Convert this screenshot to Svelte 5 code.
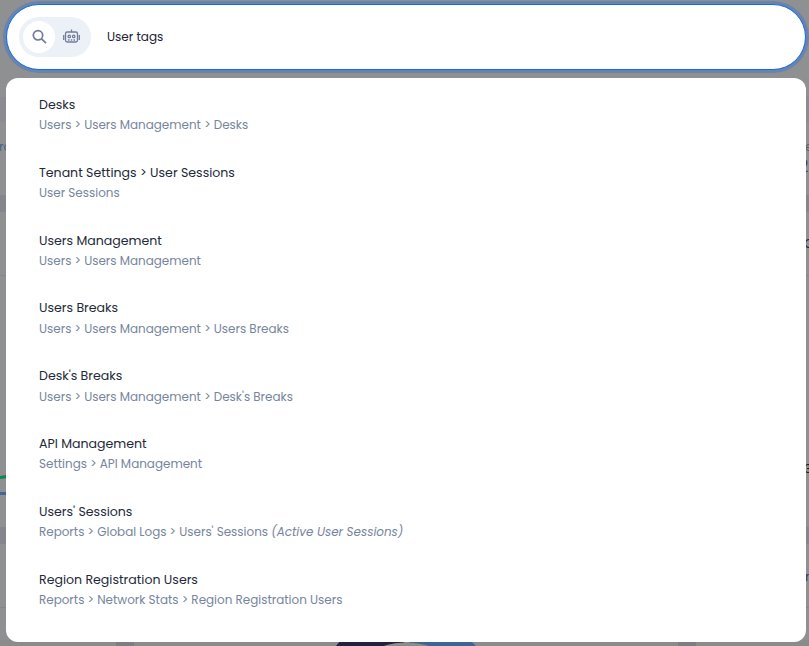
<script>
  const results = [
    { title: 'Desks', path: 'Users > Users Management > Desks' },
    { title: 'Tenant Settings > User Sessions', path: 'User Sessions' },
    { title: 'Users Management', path: 'Users > Users Management' },
    { title: 'Users Breaks', path: 'Users > Users Management > Users Breaks' },
    { title: "Desk's Breaks", path: "Users > Users Management > Desk's Breaks" },
    { title: 'API Management', path: 'Settings > API Management' },
    { title: "Users' Sessions", path: "Reports > Global Logs > Users' Sessions", note: '(Active User Sessions)' },
    { title: 'Region Registration Users', path: 'Reports > Network Stats > Region Registration Users' }
  ];
</script>

<div class="page">
  <svg class="backdrop" width="809" height="646" viewBox="0 0 809 646" aria-hidden="true">
    <rect width="809" height="646" fill="#8f9092" />
    <rect y="97" width="809" height="25" fill="#8b8b91" />
    <rect y="195" width="809" height="17" fill="#85858d" />
    <rect y="527" width="809" height="17" fill="#85858d" />
    <path d="M0 275.500H809M0 607.500H809" stroke="#85868a" />
    <path d="M0 477.500L10 476" stroke="#07894f" stroke-width="3" />
    <path d="M0 493.500H10" stroke="#40669f" stroke-width="3" />
    <rect y="640" width="809" height="6" fill="#8b8b8b" />
    <rect x="116" y="640" width="18" height="6" fill="#7e7d86" />
    <rect x="678" y="640" width="18" height="6" fill="#7e7d86" />
    <path d="M336 646L341 640H404V642.500C395 643 389 644 384 646Z" fill="#20223f" />
    <path d="M409 640H470L476 646H429C423 644 416 643 409 642.500Z" fill="#3f6494" />
    <g font-family="Poppins, sans-serif" font-size="12">
      <text x="-1" y="151" fill="#4b6284">rd</text>
      <text x="805" y="151" fill="#56616f">e</text>
      <text x="798.500" y="172" font-size="17" fill="#2b4769">2</text>
      <text x="804" y="248" font-size="13" fill="#25243a">C</text>
      <text x="804" y="473" font-size="13" fill="#222">3</text>
      <text x="805" y="581" font-size="13" fill="#26437b">m</text>
    </g>
  </svg>

  <div class="search">
    <div class="toggle">
      <span class="mode active">
        <svg width="16" height="16" viewBox="0 0 16 16" fill="none" stroke="#717b98" stroke-width="1.700">
          <circle cx="7" cy="6.300" r="4.700" />
          <path d="M10.500 9.800L15 14.200" />
        </svg>
      </span>
      <span class="mode">
        <svg width="18" height="16" viewBox="0 0 18 16" fill="none" stroke="#747d9b" stroke-width="1.300">
          <rect x="3.500" y="3" width="12" height="10" rx="1.800" />
          <path d="M9.500 3V.6M1.700 6V11M17.300 6V11M6 11H7.500M8.800 11H10.200M11.500 11H13" />
          <circle cx="7.300" cy="7.400" r="1.200" />
          <circle cx="11.700" cy="7.400" r="1.200" />
        </svg>
      </span>
    </div>
    <span class="query">User tags</span>
  </div>

  <ul class="results">
    {#each results as item}
      <li>
        <span class="title">{item.title}</span>
        <span class="path">{item.path}{#if item.note}{' '}<em>{item.note}</em>{/if}</span>
      </li>
    {/each}
  </ul>
</div>

<style>
  :global(body) { margin: 0; overflow: hidden; }
  .page {
    position: relative;
    box-sizing: border-box;
    width: 809px;
    height: 646px;
    padding: 4px 3px 0 6px;
    overflow: hidden;
    font-family: Poppins, Inter, sans-serif;
    font-size: 12px;
  }
  .backdrop { position: absolute; inset: 0; }
  .search {
    position: relative;
    box-sizing: border-box;
    width: 800px;
    height: 66px;
    padding-left: 12px;
    display: flex;
    align-items: center;
    border: 1px solid #1269f3;
    border-radius: 33px;
    background: #fff;
    box-shadow: 0 0 0 3px #6883ac;
  }
  .toggle {
    box-sizing: border-box;
    display: flex;
    width: 72px;
    height: 40px;
    padding: 4px;
    border-radius: 20px;
    background: #ebf1f6;
  }
  .mode {
    display: flex;
    width: 32px;
    height: 32px;
    align-items: center;
    justify-content: center;
    border-radius: 50%;
  }
  .active { background: #fff; }
  .query { margin-left: 16px; color: #1b2132; white-space: nowrap; }
  .results {
    position: relative;
    box-sizing: border-box;
    width: 800px;
    height: 564px;
    margin: 8px 0 0;
    padding: 16.900px 33px 0;
    list-style: none;
    background: #fff;
    border-radius: 12px;
  }
  li { height: 67.860px; display: flex; flex-direction: column; white-space: nowrap; }
  .title { height: 20.240px; line-height: 20.500px; font-size: 12.570px; color: #222939; }
  .path { height: 20px; line-height: 20px; font-size: 11.940px; color: #76859c; }
</style>
